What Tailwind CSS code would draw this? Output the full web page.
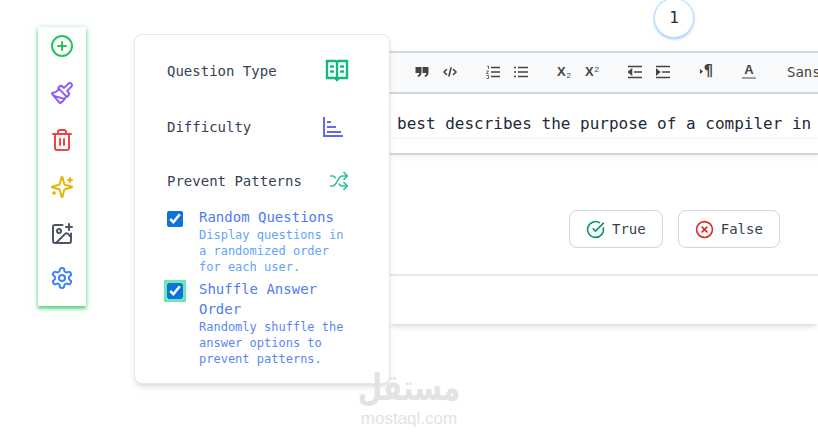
<!DOCTYPE html>
<html lang="en">
<head>
    <meta charset="UTF-8">
    <title>Quiz editor</title>
    <script src="https://cdn.jsdelivr.net/npm/@tailwindcss/browser@4"></script>
</head>
<body class="bg-white">
<div class="relative flex h-[435px] w-[818px] overflow-hidden bg-white pl-[38px] font-['DejaVu_Sans_Mono',monospace]">

    <!-- side toolbar -->
    <div class="mt-[27px] flex h-[279px] w-[48px] shrink-0 flex-col items-center gap-[23px] bg-white pt-[7px] shadow-[0_1px_5px_rgba(34,197,94,0.5),0_3px_3px_rgba(34,197,94,0.55)]">
        <svg class="size-6" viewBox="0 0 24 24" fill="none" stroke="#22c55e" stroke-width="2" stroke-linecap="round" stroke-linejoin="round"><circle cx="12" cy="12" r="10"/><path d="M8 12h8"/><path d="M12 8v8"/></svg>
        <svg class="size-6" viewBox="0 0 24 24" fill="none" stroke="#8b5cf6" stroke-width="2" stroke-linecap="round" stroke-linejoin="round"><path d="m14.622 17.897-10.68-2.913"/><path d="M18.376 2.622a1 1 0 1 1 3.002 3.002L17.36 9.643a.5.5 0 0 0 0 .707l.944.944a2.41 2.41 0 0 1 0 3.408l-.944.944a.5.5 0 0 1-.707 0L8.354 7.348a.5.5 0 0 1 0-.707l.944-.944a2.41 2.41 0 0 1 3.408 0l.944.944a.5.5 0 0 0 .707 0z"/><path d="M9 8c-1.804 2.71-3.97 3.46-6.583 3.948a.507.507 0 0 0-.302.819l7.32 8.883a1 1 0 0 0 1.185.204C12.735 20.405 16 16.792 16 15"/></svg>
        <svg class="size-6" viewBox="0 0 24 24" fill="none" stroke="#ef4444" stroke-width="2" stroke-linecap="round" stroke-linejoin="round"><path d="M3 6h18"/><path d="M19 6v14c0 1-1 2-2 2H7c-1 0-2-1-2-2V6"/><path d="M8 6V4c0-1 1-2 2-2h4c1 0 2 1 2 2v2"/><path d="M10 11v6"/><path d="M14 11v6"/></svg>
        <svg class="size-6" viewBox="0 0 24 24" fill="none" stroke="#eab308" stroke-width="2" stroke-linecap="round" stroke-linejoin="round"><path d="M9.937 15.5A2 2 0 0 0 8.5 14.063l-6.135-1.582a.5.5 0 0 1 0-.962L8.5 9.936A2 2 0 0 0 9.937 8.5l1.582-6.135a.5.5 0 0 1 .963 0L14.063 8.5A2 2 0 0 0 15.5 9.937l6.135 1.581a.5.5 0 0 1 0 .964L15.5 14.063a2 2 0 0 0-1.437 1.437l-1.582 6.135a.5.5 0 0 1-.963 0z"/><path d="M20 3v4"/><path d="M22 5h-4"/><path d="M4 17v2"/><path d="M5 18H3"/></svg>
        <svg class="size-6" viewBox="0 0 24 24" fill="none" stroke="#4b5563" stroke-width="2" stroke-linecap="round" stroke-linejoin="round"><path d="M16 5h6"/><path d="M19 2v6"/><path d="M21 11.5V19a2 2 0 0 1-2 2H5a2 2 0 0 1-2-2V5a2 2 0 0 1 2-2h7.5"/><path d="m21 15-3.086-3.086a2 2 0 0 0-2.828 0L6 21"/><circle cx="9" cy="9" r="2"/></svg>
        <svg class="-mt-[3px] size-6" viewBox="0 0 24 24" fill="none" stroke="#3b82f6" stroke-width="2" stroke-linecap="round" stroke-linejoin="round"><path d="M12.22 2h-.44a2 2 0 0 0-2 2v.18a2 2 0 0 1-1 1.73l-.43.25a2 2 0 0 1-2 0l-.15-.08a2 2 0 0 0-2.73.73l-.22.38a2 2 0 0 0 .73 2.73l.15.1a2 2 0 0 1 1 1.72v.51a2 2 0 0 1-1 1.74l-.15.09a2 2 0 0 0-.73 2.73l.22.38a2 2 0 0 0 2.73.73l.15-.08a2 2 0 0 1 2 0l.43.25a2 2 0 0 1 1 1.73V20a2 2 0 0 0 2 2h.44a2 2 0 0 0 2-2v-.18a2 2 0 0 1 1-1.73l.43-.25a2 2 0 0 1 2 0l.15.08a2 2 0 0 0 2.73-.73l.22-.39a2 2 0 0 0-.73-2.73l-.15-.08a2 2 0 0 1-1-1.74v-.5a2 2 0 0 1 1-1.74l.15-.09a2 2 0 0 0 .73-2.73l-.22-.38a2 2 0 0 0-2.73-.73l-.15.08a2 2 0 0 1-2 0l-.43-.25a2 2 0 0 1-1-1.73V4a2 2 0 0 0-2-2z"/><circle cx="12" cy="12" r="3"/></svg>
    </div>

    <!-- settings popover -->
    <div class="relative z-10 mt-[34px] ml-[48px] h-[350px] w-[256px] shrink-0 rounded-lg border border-gray-200 bg-white pt-[24px] pl-[32px] shadow-md">
        <div class="flex h-6 w-[182px] items-center justify-between text-sm text-gray-700">
            <span>Question Type</span>
            <svg class="size-[24px]" viewBox="0 0 24 24" fill="none" stroke="#10b981" stroke-width="2.400"><path d="M2 2h8.500l1.500 1 1.500-1H22v17h-8l-2 2-2-2H2z"/><path d="M12 3v16"/><path d="M5 7.500h4"/><path d="M15 7.500h4"/><path d="M5 12.500h4"/><path d="M15 12.500h4"/></svg>
        </div>
        <div class="mt-8 flex h-6 w-[182px] items-center justify-between text-sm text-gray-700">
            <span>Difficulty</span>
            <svg class="mr-[6px] size-[22px]" viewBox="0 0 22 22" fill="none" stroke="#6366f1" stroke-width="2"><path d="M3 1v19h19"/><path d="M6 6h4"/><path d="M6 11h9"/><path d="M6 16h14"/></svg>
        </div>
        <div class="mt-[30px] flex h-6 w-[182px] items-center justify-between text-sm text-gray-700">
            <span>Prevent Patterns</span>
            <svg class="size-[20px]" viewBox="0 0 24 24" fill="none" stroke="#34bf9b" stroke-width="2" stroke-linecap="round" stroke-linejoin="round"><path d="m18 14 4 4-4 4"/><path d="m18 2 4 4-4 4"/><path d="M2 18h1.973a4 4 0 0 0 3.300-1.700l5.454-8.600a4 4 0 0 1 3.300-1.700H22"/><path d="M2 6h1.972a4 4 0 0 1 3.600 2.200"/><path d="M22 18h-6.041a4 4 0 0 1-3.300-1.800l-.359-.450"/></svg>
        </div>

        <div class="mt-[14px] flex gap-4">
            <input type="checkbox" checked class="mt-1 size-4 shrink-0 accent-[#0b73d9]">
            <div class="w-[150px]">
                <p class="text-sm leading-5 text-[#4f7cf0]">Random Questions</p>
                <p class="text-xs leading-4 text-[#60a5fa]">Display questions in a randomized order for each user.</p>
            </div>
        </div>
        <div class="mt-1 flex gap-4">
            <input type="checkbox" checked class="mt-1 size-4 shrink-0 accent-[#0b73d9] outline-3 outline-[#6ee7b7]">
            <div class="w-[150px]">
                <p class="text-sm leading-5 text-[#4f7cf0]">Shuffle Answer Order</p>
                <p class="text-xs leading-4 text-[#5b87f5]">Randomly shuffle the answer options to prevent patterns.</p>
            </div>
        </div>
    </div>

    <!-- question editor -->
    <div class="min-w-0 flex-1">
        <div class="-mt-[2px] mb-[13px] ml-[264px] flex size-10 items-center justify-center rounded-full border border-blue-200 bg-white text-base text-gray-800 shadow-[0_1px_3px_#93c5fd]">1</div>

        <div class="h-[273px] bg-white shadow-md">
            <div class="flex h-[43px] items-center overflow-hidden border-y-2 border-gray-300 bg-gray-50 pb-[2px] pl-[18px] text-[#444]">
                <div class="flex w-[56px] shrink-0">
                    <span class="flex w-7 justify-center"><svg class="size-[14px]" viewBox="0 0 14 14" fill="#444"><path d="M.5 2h6v5.500c0 2.500-1.500 4-3.500 4.500l-.6-1.200c1.200-.5 1.800-1.500 1.800-2.800H.5z"/><path d="M7.500 2h6v5.500c0 2.500-1.500 4-3.500 4.500l-.6-1.200c1.200-.5 1.800-1.500 1.800-2.800H7.500z"/></svg></span>
                    <span class="flex w-7 justify-center"><svg class="size-[14px]" viewBox="0 0 14 14" fill="none" stroke="#444" stroke-width="1.600" stroke-linecap="round" stroke-linejoin="round"><path d="M3.500 4.500 1 7l2.500 2.500"/><path d="M10.500 4.500 13 7l-2.500 2.500"/><path d="M8 3 6 11"/></svg></span>
                </div>
                <div class="ml-[15px] flex w-[56px] shrink-0">
                    <span class="flex w-7 justify-center"><svg class="size-[14px]" viewBox="0 0 14 14" fill="none" stroke="#444" stroke-width="1.500"><path d="M5 2.500h9"/><path d="M5 7h9"/><path d="M5 11.500h9"/><path d="M1 1h1.500v3M.5 6h2L.5 8.500h2M.5 10.500h2v3h-2" stroke-width=".8"/></svg></span>
                    <span class="flex w-7 justify-center"><svg class="size-[14px]" viewBox="0 0 14 14" fill="none" stroke="#444" stroke-width="1.500"><path d="M4 2.500h10"/><path d="M4 7h10"/><path d="M4 11.500h10"/><path d="M0 2.500h2"/><path d="M0 7h2"/><path d="M0 11.500h2"/></svg></span>
                </div>
                <div class="ml-[15px] flex w-[56px] shrink-0 font-['Liberation_Sans',sans-serif] font-bold">
                    <span class="flex w-7 justify-center"><span class="text-[13px] leading-none">X<sub class="ml-[1px] text-[8px] font-normal">2</sub></span></span>
                    <span class="flex w-7 justify-center"><span class="text-[13px] leading-none">X<sup class="ml-[1px] text-[8px] font-normal">2</sup></span></span>
                </div>
                <div class="ml-[15px] flex w-[56px] shrink-0">
                    <span class="flex w-7 justify-center"><svg class="size-[14px]" viewBox="0 0 14 14" fill="none" stroke="#444" stroke-width="1.500"><path d="M0 1.500h14"/><path d="M6 7h8"/><path d="M0 12.500h14"/><path d="M3.500 4.500 .5 7l3 2.500z" fill="#444"/></svg></span>
                    <span class="flex w-7 justify-center"><svg class="size-[14px]" viewBox="0 0 14 14" fill="none" stroke="#444" stroke-width="1.500"><path d="M0 1.500h14"/><path d="M6 7h8"/><path d="M0 12.500h14"/><path d="M.5 4.500 3.500 7l-3 2.500z" fill="#444"/></svg></span>
                </div>
                <div class="ml-[15px] flex w-7 shrink-0 items-center justify-center">
                    <svg class="size-[5px]" viewBox="0 0 5 8" fill="#444"><path d="M0 0l5 4-5 4z"/></svg>
                    <span class="text-[15px] leading-none font-bold">¶</span>
                </div>
                <div class="ml-[15px] flex w-7 shrink-0 flex-col items-center">
                    <span class="font-['Liberation_Sans',sans-serif] text-[13px] leading-[12px] font-bold">A</span>
                    <span class="mt-[1px] h-[2px] w-[14px] bg-gray-400"></span>
                </div>
                <span class="ml-[24px] shrink-0 text-sm whitespace-nowrap">Sans</span>
            </div>
            <div class="flex h-[45px] items-center overflow-hidden border-b border-gray-100 pt-[16px] pl-[7px] text-base whitespace-nowrap text-gray-800">best describes the purpose of a compiler in</div>
            <div class="h-[16px] border-b-2 border-gray-300 shadow-[0_2px_6px_rgba(0,0,0,0.06)]"></div>
            <div class="flex gap-[15px] pt-[55px] pl-[179px]">
                <div class="flex h-[38px] items-center gap-[7px] rounded-lg border border-gray-300 px-4 text-sm text-gray-700">
                    <svg class="size-[19px]" viewBox="0 0 24 24" fill="none" stroke="#059669" stroke-width="2" stroke-linecap="round" stroke-linejoin="round"><path d="M21.801 10A10 10 0 1 1 17 3.335"/><path d="m9 11 3 3L22 4"/></svg>
                    True
                </div>
                <div class="flex h-[38px] items-center gap-[7px] rounded-lg border border-gray-300 px-4 text-sm text-gray-700">
                    <svg class="size-[19px]" viewBox="0 0 24 24" fill="none" stroke="#dc2626" stroke-width="2" stroke-linecap="round" stroke-linejoin="round"><circle cx="12" cy="12" r="10"/><path d="m15 9-6 6"/><path d="m9 9 6 6"/></svg>
                    False
                </div>
            </div>
            <div class="mt-[26px] h-[2px] bg-gray-200"></div>
        </div>
    </div>

    <!-- watermark -->
    <div class="pointer-events-none absolute top-[376px] left-[350px] z-20 flex w-[118px] flex-col items-center text-[#e3e3e3]">
        <span dir="rtl" class="h-[34px] origin-bottom scale-y-[1.3] font-['DejaVu_Sans',sans-serif] text-[28px] leading-[34px] font-bold">مستقل</span>
        <span class="font-['Liberation_Sans',sans-serif] text-[17px] leading-[18px]">mostaql.com</span>
    </div>
</div>
</body>
</html>
